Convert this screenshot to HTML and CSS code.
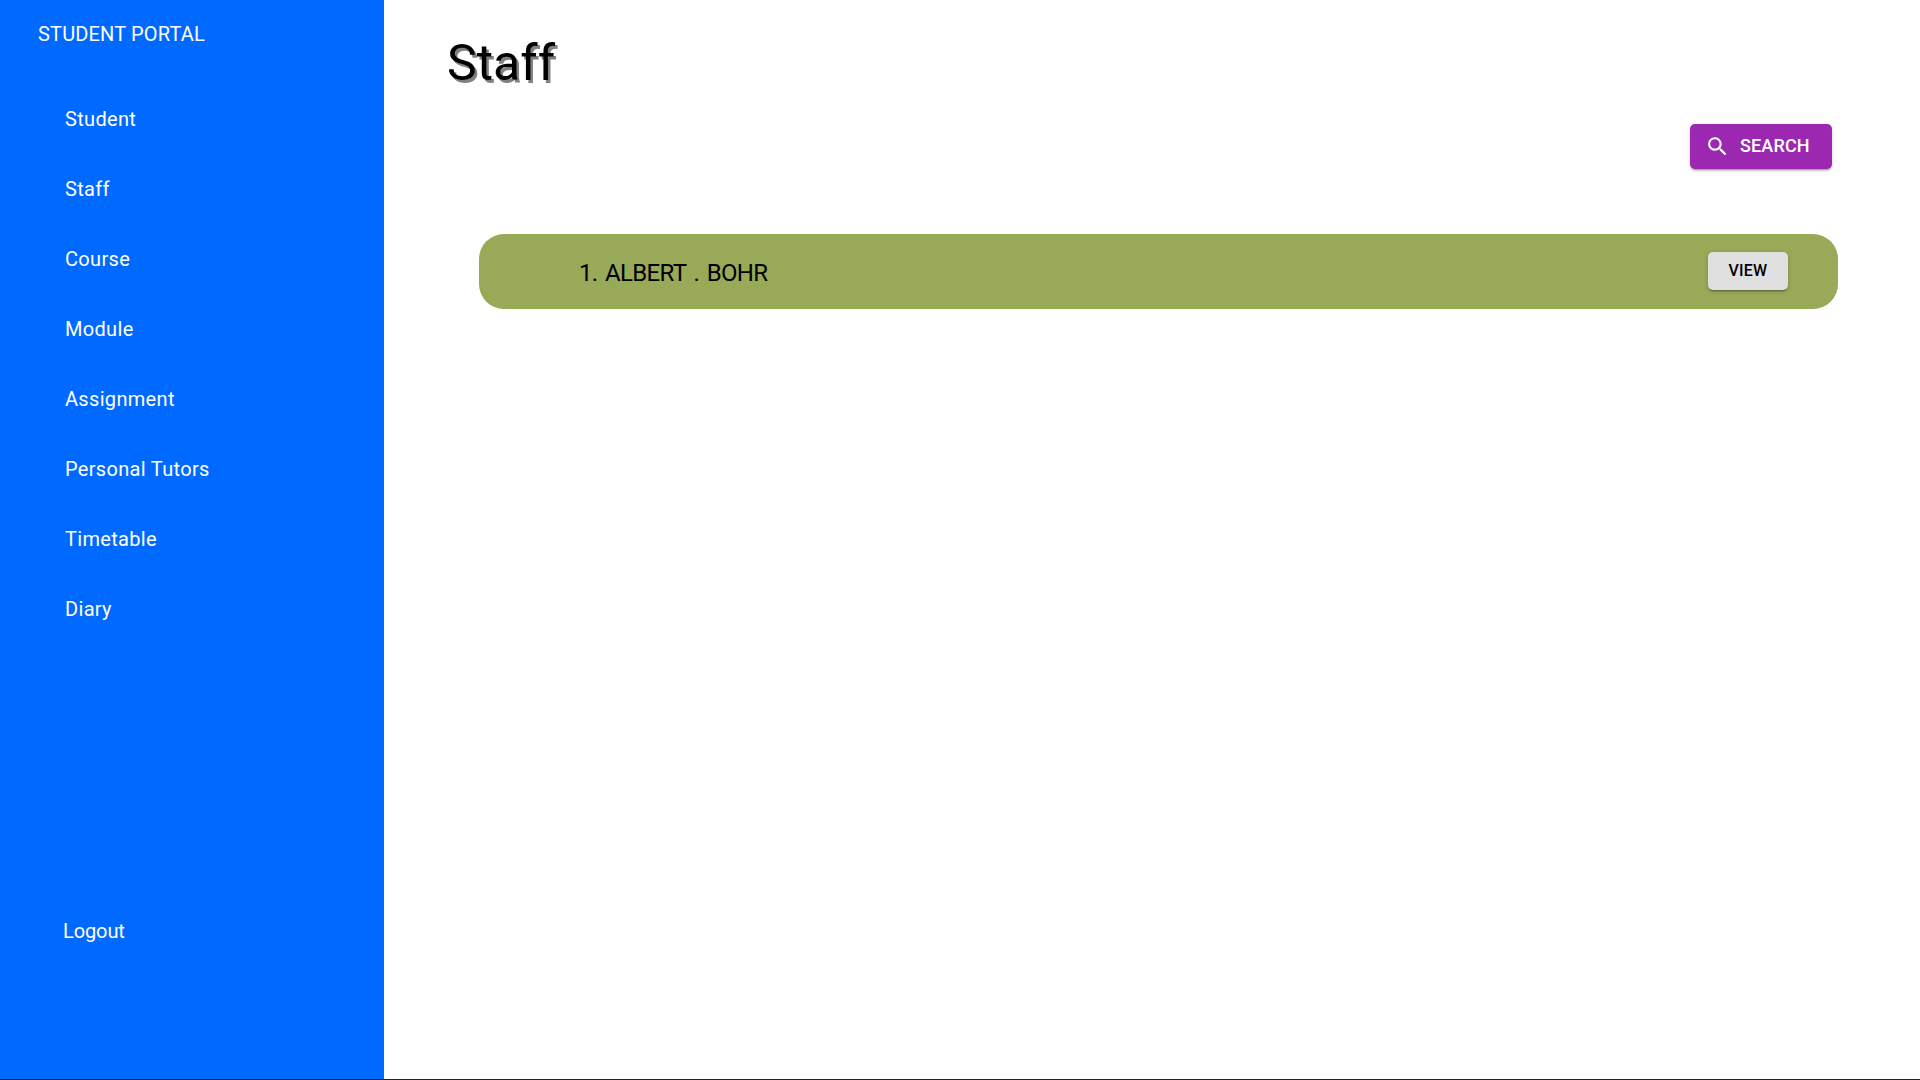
FILE: index.html
```html
<!DOCTYPE html>
<html lang="en">
<head>
<meta charset="utf-8">
<title>Student Portal</title>
<link rel="stylesheet" href="styles.css">
</head>
<body>
<div class="app">
  <aside class="sidebar">
    <div class="brand">STUDENT PORTAL</div>
    <nav class="menu">
      <a class="item">Student</a>
      <a class="item">Staff</a>
      <a class="item">Course</a>
      <a class="item">Module</a>
      <a class="item">Assignment</a>
      <a class="item">Personal Tutors</a>
      <a class="item">Timetable</a>
      <a class="item">Diary</a>
    </nav>
    <a class="logout">Logout</a>
  </aside>
  <main class="content">
    <h1 class="title">Staff</h1>
    <div class="actions">
      <button class="search"><svg class="icon" viewBox="0 0 24 24"><path d="M15.5 14h-.79l-.28-.27C15.41 12.59 16 11.11 16 9.5 16 5.91 13.09 3 9.5 3S3 5.91 3 9.5 5.91 16 9.5 16c1.61 0 3.09-.59 4.23-1.57l.27.28v.79l5 4.99L20.49 19l-4.99-5zm-6 0C7.01 14 5 11.99 5 9.5S7.01 5 9.5 5 14 7.01 14 9.5 11.99 14 9.5 14z"/></svg><span class="label">SEARCH</span></button>
    </div>
    <div class="row">
      <span class="name">1. ALBERT . BOHR</span>
      <button class="view">VIEW</button>
    </div>
  </main>
</div>
</body>
</html>
```
FILE: styles.css
```css
* { box-sizing: border-box; }
body { margin: 0; background: #fff; font-family: Roboto, sans-serif; overflow: hidden; }
.app { display: flex; height: 1080px; border-bottom: 1px solid #222; }
.sidebar { width: 384px; background: #0069ff; color: #fff; display: flex; flex-direction: column; font-size: 20px; }
.brand { padding: 19px 0 0 38px; height: 84px; line-height: 30px; letter-spacing: 0.16px; }
.menu { display: flex; flex-direction: column; }
.item { height: 70px; line-height: 70px; padding-left: 65px; letter-spacing: 0.32px; }
.logout { margin: 272px 0 0 63px; line-height: 30px; letter-spacing: -0.1px; }
.content { flex: 1; display: flex; flex-direction: column; }
.title { margin: 33px 0 0 63px; font-size: 50px; font-weight: 400; line-height: 60px; text-shadow: 2.5px 2.5px 0 #808080; }
.actions { display: flex; justify-content: flex-end; padding: 31px 88px 0 0; }
button { border: 0; font-family: inherit; font-weight: 500; display: flex; align-items: center; border-radius: 5px; box-shadow: 0 3px 1px -2px rgba(0,0,0,.2), 0 2px 2px rgba(0,0,0,.14), 0 1px 5px rgba(0,0,0,.12); }
.search { width: 142px; height: 45px; padding: 0 0 0 15px; background: #9c27b0; color: #fff; font-size: 18px; letter-spacing: .15px; gap: 10px; }
.label { padding-bottom: 2px; }
.icon { width: 25px; height: 25px; fill: currentColor; }
.row { margin: 65px 82px 0 95px; height: 75px; border-radius: 25px; background: #98a958; display: flex; align-items: center; justify-content: space-between; padding: 0 50px 1px 100px; }
.name { font-size: 24px; padding-top: 4px; letter-spacing: -.65px; word-spacing: 2.2px; }
.view { width: 80px; height: 38px; padding: 0 0 1px; justify-content: center; background: #e0e0e0; color: #000; font-size: 16px; letter-spacing: .2px; }
```
